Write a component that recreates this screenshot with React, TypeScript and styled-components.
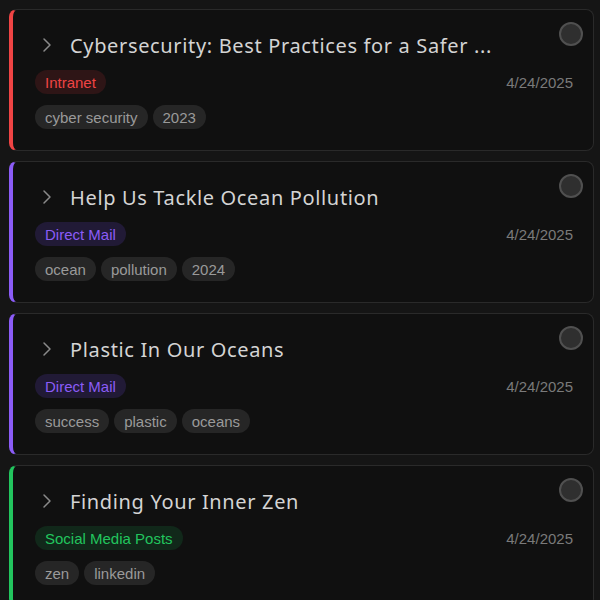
import React from "react";
import styled, { createGlobalStyle } from "styled-components";
import { ChevronRight } from "lucide-react";

const Global = createGlobalStyle`
  html, body { margin: 0; padding: 0; background: #151515; }
  body { font-family: "Liberation Sans", Arial, sans-serif; }
`;

const List = styled.div`
  display: flex;
  flex-direction: column;
  gap: 10px;
  padding: 9px 6px 9px 9px;
`;

const Card = styled.div<{ $accent: string }>`
  position: relative;
  background: #101010;
  border: 1px solid #2a2a2a;
  border-left: 4px solid ${(p) => p.$accent};
  border-radius: 8px;
  padding: 20px 20px 21px 22px;
  display: flex;
  flex-direction: column;
`;

const Header = styled.div`
  display: flex;
  align-items: center;
  height: 30px;
  gap: 11px;
  padding-right: 60px;
`;

const Chevron = styled.span`
  display: flex;
  width: 24px;
  justify-content: center;
  color: #8a8a8a;
`;

const Title = styled.div`
  font-family: "Noto Sans", sans-serif;
  font-size: 20px;
  letter-spacing: 0.65px;
  color: #d4d4d4;
  white-space: nowrap;
`;

const MetaRow = styled.div`
  display: flex;
  justify-content: space-between;
  align-items: center;
  margin-top: 10px;
`;

const Badge = styled.span<{ $color: string; $bg: string }>`
  display: inline-flex;
  align-items: center;
  height: 24px;
  padding: 0 10px;
  border-radius: 12px;
  font-size: 15px;
  color: ${(p) => p.$color};
  background: ${(p) => p.$bg};
`;

const DateText = styled.span`
  font-size: 15px;
  color: #7a7a7a;
`;

const Tags = styled.div`
  display: flex;
  gap: 5px;
  margin-top: 11px;
`;

const Tag = styled.span`
  display: inline-flex;
  align-items: center;
  height: 24px;
  padding: 0 10px;
  border-radius: 12px;
  font-size: 15px;
  color: #9a9a9a;
  background: #262626;
`;

const Check = styled.span`
  position: absolute;
  top: 12px;
  right: 10px;
  width: 20px;
  height: 20px;
  border-radius: 50%;
  border: 2px solid #505050;
  background: #2f2f2f;
`;

type Item = {
  title: string;
  accent: string;
  badge: string;
  badgeColor: string;
  badgeBg: string;
  tags: string[];
};

const red = { accent: "#ef4444", badgeColor: "#ef4444", badgeBg: "#2e1516" };
const purple = { accent: "#8b5cf6", badgeColor: "#8b5cf6", badgeBg: "#211a36" };
const green = { accent: "#22c55e", badgeColor: "#22c55e", badgeBg: "#11281a" };

const items: Item[] = [
  { title: "Cybersecurity: Best Practices for a Safer Digital World", badge: "Intranet", tags: ["cyber security", "2023"], ...red },
  { title: "Help Us Tackle Ocean Pollution", badge: "Direct Mail", tags: ["ocean", "pollution", "2024"], ...purple },
  { title: "Plastic In Our Oceans", badge: "Direct Mail", tags: ["success", "plastic", "oceans"], ...purple },
  { title: "Finding Your Inner Zen", badge: "Social Media Posts", tags: ["zen", "linkedin"], ...green },
];

const truncate = (s: string, n = 45) => (s.length > n ? s.slice(0, n - 3) + "..." : s);

export default function App() {
  return (
    <>
      <Global />
      <List>
        {items.map((it) => (
          <Card key={it.title} $accent={it.accent}>
            <Check />
            <Header>
              <Chevron>
                <ChevronRight size={24} strokeWidth={1.5} />
              </Chevron>
              <Title>{truncate(it.title)}</Title>
            </Header>
            <MetaRow>
              <Badge $color={it.badgeColor} $bg={it.badgeBg}>{it.badge}</Badge>
              <DateText>4/24/2025</DateText>
            </MetaRow>
            <Tags>
              {it.tags.map((t) => (
                <Tag key={t}>{t}</Tag>
              ))}
            </Tags>
          </Card>
        ))}
      </List>
    </>
  );
}
